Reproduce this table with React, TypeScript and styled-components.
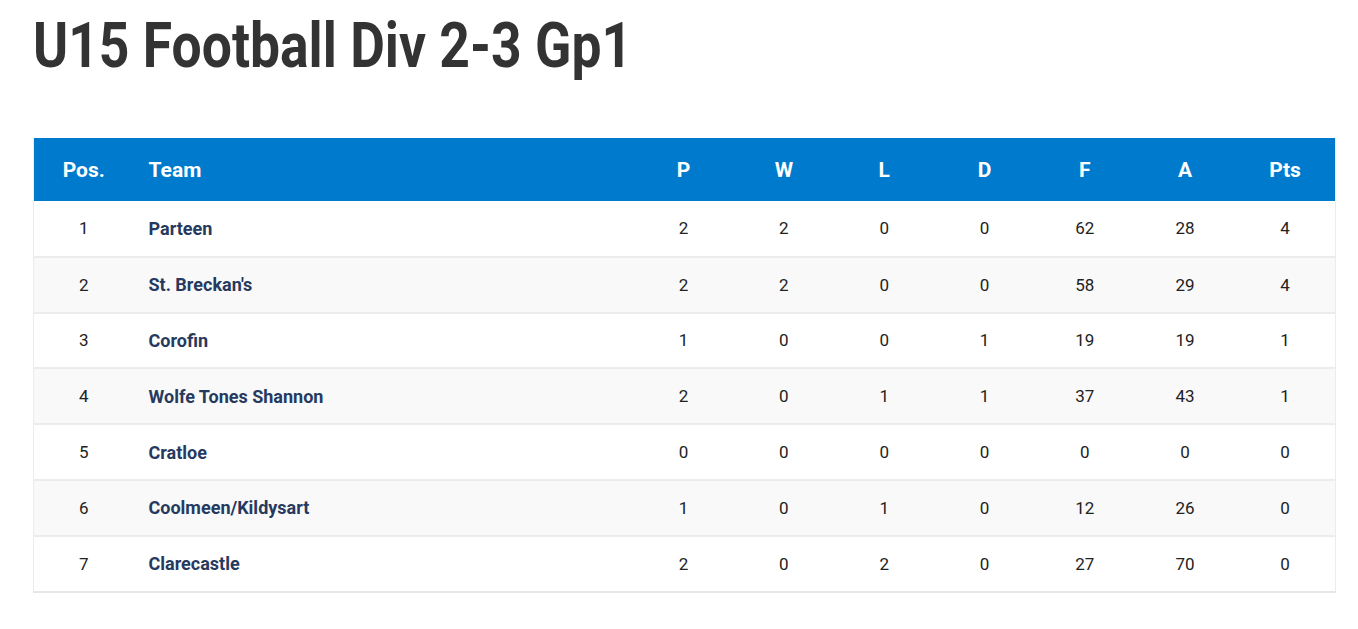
import React from 'react';
import styled, { createGlobalStyle } from 'styled-components';

const GlobalStyle = createGlobalStyle`
  body {
    margin: 0;
    background: #ffffff;
    font-family: Roboto, 'Liberation Sans', sans-serif;
  }
`;

const Page = styled.div`
  padding: 12px 22px 0 33px;
`;

const Title = styled.h1`
  margin: 0;
  font-family: Roboto, 'Liberation Sans', sans-serif;
  font-weight: 700;
  font-size: 63px;
  line-height: 68px;
  color: #333333;
  white-space: nowrap;
  transform: scaleX(0.848);
  transform-origin: left center;
`;

const Table = styled.table`
  margin-top: 58px;
  width: 1303px;
  border-collapse: collapse;
  table-layout: fixed;
  border-left: 1px solid #ececec;
  border-right: 1px solid #ececec;
  border-bottom: 2px solid #e6e6e6;
`;

const HeadRow = styled.tr`
  background: #007acc;
  height: 63px;
`;

const HeadCell = styled.th<{ left?: boolean }>`
  color: #ffffff;
  font-size: 21px;
  font-weight: 700;
  text-align: ${(p) => (p.left ? 'left' : 'center')};
  padding: 0 0 0 ${(p) => (p.left ? '15px' : '0')};
`;

const Row = styled.tr<{ odd: boolean }>`
  height: 55.8px;
  background: ${(p) => (p.odd ? '#f9f9f9' : '#ffffff')};
  border-top: 2px solid #ececec;
  &:first-child {
    border-top: none;
  }
`;

const Cell = styled.td`
  text-align: center;
  font-size: 17px;
  color: #222222;
`;

const TeamCell = styled.td`
  padding-left: 15px;
  font-size: 18px;
  font-weight: 700;
  color: #263a5f;
`;

type Team = { name: string; p: number; w: number; l: number; d: number; f: number; a: number; pts: number };

const teams: Team[] = [
  { name: 'Parteen', p: 2, w: 2, l: 0, d: 0, f: 62, a: 28, pts: 4 },
  { name: "St. Breckan's", p: 2, w: 2, l: 0, d: 0, f: 58, a: 29, pts: 4 },
  { name: 'Corofin', p: 1, w: 0, l: 0, d: 1, f: 19, a: 19, pts: 1 },
  { name: 'Wolfe Tones Shannon', p: 2, w: 0, l: 1, d: 1, f: 37, a: 43, pts: 1 },
  { name: 'Cratloe', p: 0, w: 0, l: 0, d: 0, f: 0, a: 0, pts: 0 },
  { name: 'Coolmeen/Kildysart', p: 1, w: 0, l: 1, d: 0, f: 12, a: 26, pts: 0 },
  { name: 'Clarecastle', p: 2, w: 0, l: 2, d: 0, f: 27, a: 70, pts: 0 },
];

const stats = ['P', 'W', 'L', 'D', 'F', 'A', 'Pts'];

const App = () => (
  <Page>
    <GlobalStyle />
    <Title>U15 Football Div 2-3 Gp1</Title>
    <Table>
      <colgroup>
        <col style={{ width: 100 }} />
        <col />
        {stats.map((s) => (
          <col key={s} style={{ width: 100.3 }} />
        ))}
      </colgroup>
      <thead>
        <HeadRow>
          <HeadCell>Pos.</HeadCell>
          <HeadCell left>Team</HeadCell>
          {stats.map((s) => (
            <HeadCell key={s}>{s}</HeadCell>
          ))}
        </HeadRow>
      </thead>
      <tbody>
        {teams.map((t, i) => (
          <Row key={t.name} odd={i % 2 === 1}>
            <Cell>{i + 1}</Cell>
            <TeamCell>{t.name}</TeamCell>
            <Cell>{t.p}</Cell>
            <Cell>{t.w}</Cell>
            <Cell>{t.l}</Cell>
            <Cell>{t.d}</Cell>
            <Cell>{t.f}</Cell>
            <Cell>{t.a}</Cell>
            <Cell>{t.pts}</Cell>
          </Row>
        ))}
      </tbody>
    </Table>
  </Page>
);

export default App;
